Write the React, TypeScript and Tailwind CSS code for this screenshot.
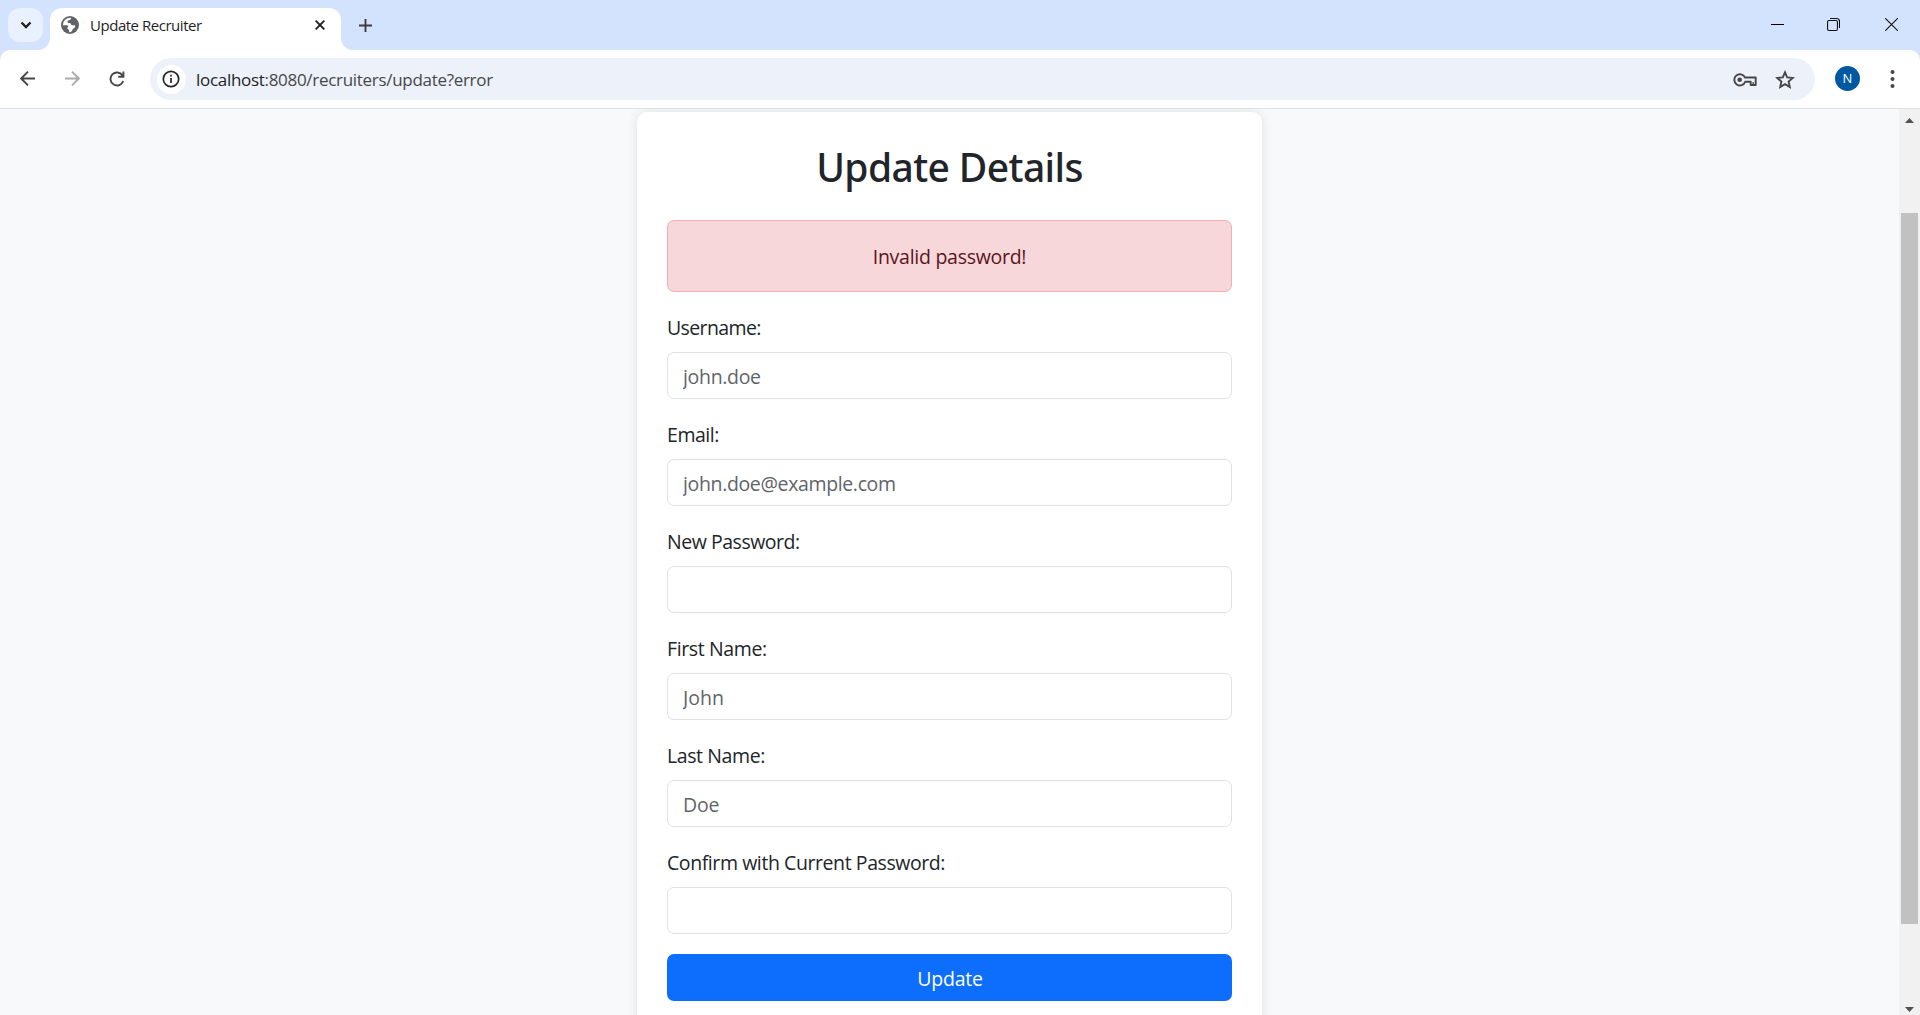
type Field = { label: string; placeholder: string; labelSpacing: string; inputSpacing: string; type?: string };

const fields: Field[] = [
  { label: "Username:", placeholder: "john.doe", labelSpacing: "tracking-[-0.62px]", inputSpacing: "tracking-[-0.32px]" },
  { label: "Email:", placeholder: "john.doe@example.com", labelSpacing: "tracking-[-0.45px]", inputSpacing: "tracking-[-0.36px]" },
  { label: "New Password:", placeholder: "", labelSpacing: "tracking-[-0.47px]", inputSpacing: "", type: "password" },
  { label: "First Name:", placeholder: "John", labelSpacing: "tracking-[-0.38px]", inputSpacing: "tracking-[0px]" },
  { label: "Last Name:", placeholder: "Doe", labelSpacing: "tracking-[-0.4px]", inputSpacing: "tracking-[-0.2px]" },
  { label: "Confirm with Current Password:", placeholder: "", labelSpacing: "tracking-[-0.42px]", inputSpacing: "", type: "password" },
];

function TabStrip() {
  return (
    <div className="flex h-[50px] shrink-0 items-start bg-[#d3e3fd]">
      <button className="mt-2 ml-2 flex h-[34px] w-[35px] items-center justify-center rounded-xl bg-[#e9f1fe]">
        <svg width="12" height="8" viewBox="0 0 12 8" fill="none" stroke="#1f1f1f" strokeWidth="2.3">
          <path d="M1.5 1.5 6 6l4.500-4.500" />
        </svg>
      </button>
      <div className="relative mt-2 ml-[7px] flex h-[42px] w-[291px] items-start rounded-t-xl bg-white pt-[7px] pl-[11px]">
        <svg className="absolute bottom-0 -left-3" width="12" height="12" viewBox="0 0 12 12">
          <path d="M12 0v12H0A12 12 0 0 0 12 0Z" fill="#fff" />
        </svg>
        <svg className="absolute -right-3 bottom-0" width="12" height="12" viewBox="0 0 12 12">
          <path d="M0 0v12h12A12 12 0 0 1 0 0Z" fill="#fff" />
        </svg>
        <svg className="mt-[1px]" width="18" height="18" viewBox="0 0 18 18">
          <circle cx="9" cy="9" r="9" fill="#5f6368" />
          <path
            d="M10.200 1.900C9.500 3 9.900 3.500 8.800 3.900 7.700 4.200 6.500 4.500 6.500 5.700c0 1 .7 1.300 1.700 1.300 1.300 0 1.500.5 1.700 1.300.3.900 1 .9 1.900.9h1.400c.6 0 1 .4 1 1 0 1.400-1.200 1.700-2 2.500-.9.900-1 2.300-2.200 3.300-.7.300-1.400.3-2 .1.200-1.200.2-1.900-.3-2.400-.6-.6-1.400-.7-1.400-1.600 0-.9.900-1.100.9-1.900 0-.7-.6-1-1.400-1H1.900a7.200 7.200 0 0 1 8.300-7.300Z"
            fill="#fff"
          />
        </svg>
        <span className="ml-[11px] text-[15px] leading-5 tracking-[-0.47px] text-[#1f1f1f]">Update Recruiter</span>
        <svg className="absolute top-3 right-4" width="10" height="10" viewBox="0 0 10 10" stroke="#1f1f1f" strokeWidth="1.900">
          <path d="m.7.700 8.600 8.600M9.300.7.700 9.300" />
        </svg>
      </div>
      <svg className="mt-[19px] ml-[18px]" width="13" height="13" viewBox="0 0 13 13" stroke="#3c3c3c" strokeWidth="1.900">
        <path d="M6.500 0v13M0 6.500h13" />
      </svg>
      <div className="mt-[18px] mr-[22px] ml-auto flex items-center gap-[43px]">
        <svg width="13" height="13" viewBox="0 0 13 13">
          <path d="M0 6h13v1H0z" fill="#000" />
        </svg>
        <svg width="13" height="13" viewBox="0 0 13 13" fill="none" stroke="#111" strokeWidth="1.100">
          <rect x=".55" y="2.550" width="9.900" height="9.900" rx="1.500" />
          <path d="M3 .55h6.600a2.900 2.900 0 0 1 2.900 2.900V10" />
        </svg>
        <svg className="ml-[2px]" width="13" height="13" viewBox="0 0 13 13" stroke="#111" strokeWidth="1.100">
          <path d="m.3.300 12.400 12.400M12.700.3.300 12.700" />
        </svg>
      </div>
    </div>
  );
}

function Toolbar() {
  return (
    <div className="shrink-0 bg-[#d3e3fd]">
      <div className="flex h-[59px] items-center rounded-t-[10px] border-b border-[#dfe1e1] bg-white pl-5">
        <svg className="mb-px" width="15" height="15" viewBox="0 0 15 15" fill="none" stroke="#474747" strokeWidth="1.900">
          <path d="M15 7.500H1.500M8 .7 1.200 7.500 8 14.300" />
        </svg>
        <svg className="mb-px ml-[30px]" width="15" height="15" viewBox="0 0 15 15" fill="none" stroke="#ababab" strokeWidth="1.900">
          <path d="M0 7.500h13.500M7 .7l6.800 6.800L7 14.300" />
        </svg>
        <svg className="mb-px ml-[29px]" width="16" height="16" viewBox="0 0 16 16" fill="none" stroke="#474747" strokeWidth="1.900">
          <path d="M13.500 4.500A6.500 6.500 0 1 0 14.200 10M14.400.5v5.300H9.300" />
        </svg>
        <div className="ml-[25px] flex h-[42px] w-[1665px] items-center rounded-full bg-[#ecf1fa]">
          <span className="ml-[7px] flex size-[29px] items-center justify-center rounded-full bg-white">
            <svg className="mr-px" width="18" height="18" viewBox="0 0 18 18" fill="none" stroke="#262626" strokeWidth="1.700">
              <circle cx="9" cy="9" r="7.700" />
              <path d="M9 8v5M9 4.800v1.800" />
            </svg>
          </span>
          <span className="ml-[10px] pt-[2px] text-[17px] leading-6 tracking-[-0.3px] text-[#474747]">
            <span className="text-[#1f1f1f]">localhost</span>:8080/recruiters/update?error
          </span>
          <svg className="mt-px ml-auto" width="24" height="14" viewBox="0 0 24 14" fill="none" stroke="#474747" strokeWidth="1.900">
            <path d="M12 4.500h10.700v7.500h-5V8.700H12.200A5.600 5.600 0 1 1 12 4.500Z" strokeLinejoin="round" />
            <path d="M20.200 9v3" strokeWidth="1.300" />
            <circle cx="6.700" cy="6.800" r="2.300" fill="#474747" stroke="none" />
          </svg>
          <svg className="mr-5 ml-[18px]" width="20" height="19" viewBox="0 0 20 19" fill="none" stroke="#474747" strokeWidth="1.900">
            <path d="m10 2.300 2.200 5.100 5.600.5-4.200 3.700 1.200 5.400L10 14.100 5.200 17l1.200-5.400L2.200 7.900l5.600-.5Z" />
          </svg>
        </div>
        <span className="mb-px ml-5 flex size-[25px] items-center justify-center rounded-full bg-[#0058a1] text-[13px] leading-none text-white">N</span>
        <svg className="ml-[30px]" width="5" height="18" viewBox="0 0 5 18" fill="#474747">
          <circle cx="2.500" cy="2" r="2" />
          <circle cx="2.500" cy="9" r="2" />
          <circle cx="2.500" cy="16" r="2" />
        </svg>
      </div>
    </div>
  );
}

function Scrollbar() {
  return (
    <div className="flex w-[21px] shrink-0 flex-col items-center bg-[#f1f1f1] pr-px">
      <svg className="mt-[9px] shrink-0" width="9" height="5" viewBox="0 0 9 5" fill="#505050">
        <path d="M4.500 0 9 5H0Z" />
      </svg>
      <div className="mt-[90px] h-[711px] w-[17px] shrink-0 bg-[#c1c1c1]" />
      <svg className="mt-auto mb-[3px] shrink-0" width="9" height="5" viewBox="0 0 9 5" fill="#505050">
        <path d="M4.500 5 9 0H0Z" />
      </svg>
    </div>
  );
}

function UpdateForm() {
  return (
    <form className="mt-[3px] flex h-[960px] w-[625px] shrink-0 flex-col rounded-[10px] bg-white p-[30px] text-[19.5px] leading-[30px] text-[#212529] shadow-[0_0_12px_rgba(0,0,0,0.1)]">
      <h1 className="mb-[29px] pt-px text-center font-['Noto_Sans',sans-serif] text-[39px] leading-[48px] font-medium tracking-[-0.6px]">Update Details</h1>
      <div className="mb-5 flex h-[72px] items-center justify-center rounded-[7px] border border-[#f1aeb5] bg-[#f8d7da] pt-[2px] tracking-[-0.27px] text-[#58151c]">
        Invalid password!
      </div>
      {fields.map((f) => (
        <div key={f.label} className="mb-5">
          <label className={`mb-[9px] block pt-px ${f.labelSpacing}`}>{f.label}</label>
          <input
            type={f.type ?? "text"}
            placeholder={f.placeholder}
            className={`block h-[47px] w-full rounded-[7px] border border-[#dee2e6] bg-white px-[15px] pt-px placeholder:text-[#5f6469] ${f.inputSpacing}`}
          />
        </div>
      ))}
      <button type="button" className="h-[47px] shrink-0 rounded-[7px] bg-[#0d6efd] pt-[3px] pl-px tracking-[-0.25px] text-white">
        Update
      </button>
    </form>
  );
}

export default function App() {
  return (
    <div className="flex h-[1015px] w-[1920px] flex-col overflow-hidden font-['Open_Sans',sans-serif]">
      <TabStrip />
      <Toolbar />
      <div className="flex min-h-0 flex-1 bg-[#f8f9fb]">
        <main className="flex min-w-0 flex-1 justify-center overflow-hidden">
          <UpdateForm />
        </main>
        <Scrollbar />
      </div>
    </div>
  );
}
